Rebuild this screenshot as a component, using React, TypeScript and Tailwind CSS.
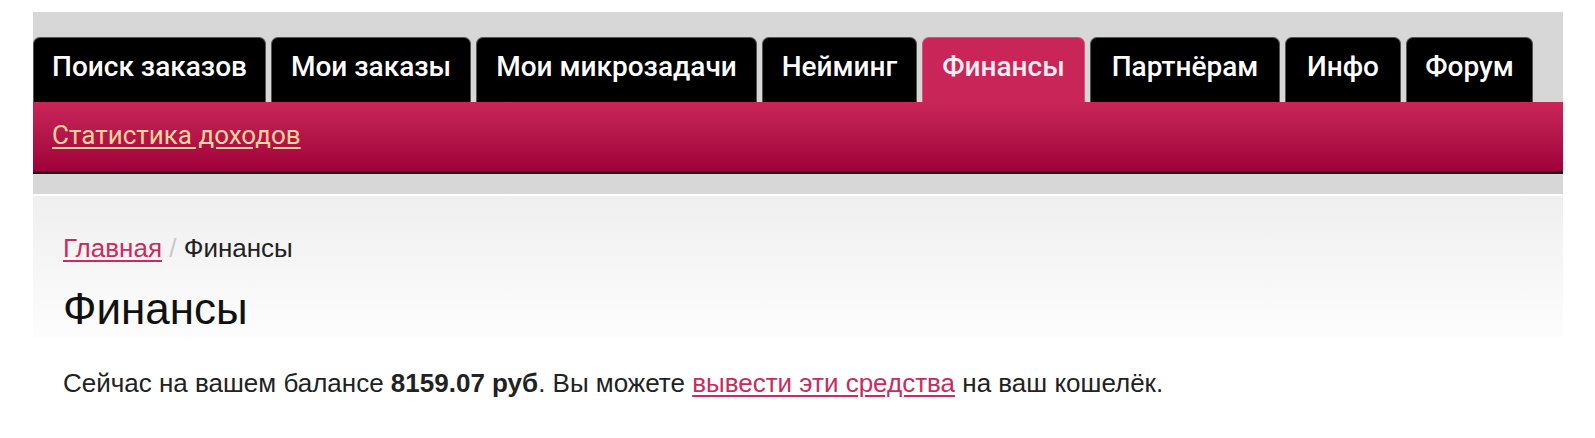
// Страница "Финансы" — верхнее меню с вкладками, подменю и блок баланса
const tabs = [
  { label: 'Поиск заказов', width: 'w-[233px]' },
  { label: 'Мои заказы', width: 'w-[200px]' },
  { label: 'Мои микрозадачи', width: 'w-[281px]' },
  { label: 'Нейминг', width: 'w-[155px]' },
  { label: 'Финансы', width: 'w-[163px]', active: true },
  { label: 'Партнёрам', width: 'w-[190px]' },
  { label: 'Инфо', width: 'w-[116px]' },
  { label: 'Форум', width: 'w-[127px]' },
];

const App = () => {
  return (
    <div className="min-h-screen bg-white pt-[12px] pl-[33px] pr-[32px]">
      {/* Шапка с меню */}
      <div className="bg-[#d7d7d7] pt-[25px] pb-[20px]">
        {/* Вкладки */}
        <div className="flex gap-[5px] h-[65px] font-['Roboto',sans-serif]">
          {tabs.map((tab) => (
            <div
              key={tab.label}
              className={`${tab.width} h-[65px] pt-[13px] text-center rounded-t-[7px] border border-b-0 text-[28px] leading-[32px] font-medium whitespace-nowrap ${
                tab.active
                  ? 'bg-[#c92559] border-[#d9527c] text-[#fdeef3]'
                  : 'bg-black border-[#555] text-white'
              }`}
            >
              {tab.label}
            </div>
          ))}
        </div>

        {/* Подменю */}
        <div className="h-[72px] pt-[18px] pl-[19px] bg-gradient-to-b from-[#c92559] to-[#a0003a] border-b-[3px] border-[#1a1a1a] font-['Roboto',sans-serif]">
          <a href="#" className="text-[26px] leading-[30px] text-[#ffd59a] underline underline-offset-[3px]">
            Статистика доходов
          </a>
        </div>
      </div>

      {/* Заголовок страницы */}
      <div className="mt-[2px] h-[141px] pt-[37px] pl-[30px] bg-gradient-to-b from-[#efefef] to-[#fdfdfd] font-['Liberation_Sans',Arial,sans-serif]">
        <div className="text-[26px] leading-[30px] text-[#222]">
          <a href="#" className="text-[#c92b5f] underline underline-offset-[3px]">Главная</a>
          <span className="text-[#c8c8c8]"> / </span>
          <span>Финансы</span>
        </div>
        <h1 className="mt-[21px] text-[44px] leading-[50px] font-normal text-[#111]">Финансы</h1>
      </div>

      {/* Баланс */}
      <p className="mt-[31px] pl-[30px] text-[26px] leading-[30px] text-[#222] font-['Liberation_Sans',Arial,sans-serif]">
        Сейчас на вашем балансе <b>8159.07 руб</b>. Вы можете{' '}
        <a href="#" className="text-[#c92b5f] underline underline-offset-[3px]">вывести эти средства</a> на ваш кошелёк.
      </p>
    </div>
  );
};

export default App;
